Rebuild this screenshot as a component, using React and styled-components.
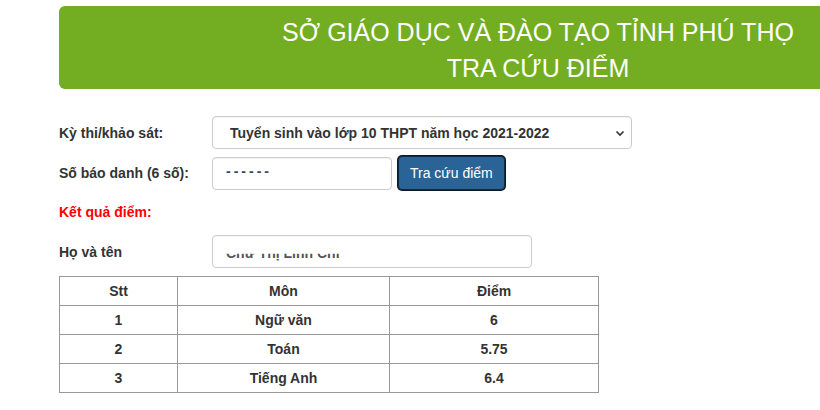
import React from "react";
import styled, { createGlobalStyle } from "styled-components";

const Global = createGlobalStyle`
  html, body {
    margin: 0;
    overflow: hidden;
    background: #fff;
    font-family: "Liberation Sans", Arial, sans-serif;
    color: #333;
  }
`;

const Page = styled.div`
  padding-left: 59px;
  padding-top: 6px;
`;

const Banner = styled.div`
  width: 958px;
  height: 83px;
  box-sizing: border-box;
  padding-top: 8px;
  background: #73ad21;
  border-radius: 6px;
  color: #fff;
  text-align: center;
  font-size: 25px;
  line-height: 36px;
`;

const Form = styled.div`
  margin-top: 27px;
  display: flex;
  flex-direction: column;
`;

const Row = styled.div`
  display: flex;
  align-items: center;
  margin-top: ${(p) => p.$gap || 0}px;
`;

const Label = styled.label`
  width: 153px;
  font-size: 14px;
  font-weight: bold;
  color: #333;
`;

const SelectBox = styled.div`
  position: relative;
  width: 420px;
  height: 33px;
  box-sizing: border-box;
  border: 1px solid #ccc;
  border-radius: 4px;
  display: flex;
  align-items: center;
  padding-left: 17px;
  font-size: 14px;
  font-weight: bold;
  color: #333;
  box-shadow: inset 0 1px 1px rgba(0, 0, 0, 0.05);
`;

const Chevron = styled.svg`
  position: absolute;
  right: 6px;
  top: 12px;
`;

const Field = styled.div`
  width: ${(p) => p.$w}px;
  height: 33px;
  box-sizing: border-box;
  border: 1px solid #ccc;
  border-radius: 4px;
  padding-left: 13px;
  font-size: 14px;
  color: #555;
  overflow: hidden;
  box-shadow: inset 0 1px 1px rgba(0, 0, 0, 0.05);
`;

const Masked = styled.span`
  display: block;
  line-height: 14px;
  margin-top: 6px;
  letter-spacing: 3px;
  color: #3d4660;
  font-weight: bold;
`;

const Hidden = styled.span`
  display: block;
  margin-top: 9px;
  font-weight: bold;
  line-height: 16px;
  clip-path: inset(55% 0 0 0);
`;

const Button = styled.button`
  margin-left: 6px;
  height: 34px;
  padding: 0 11px;
  background: #2a6496;
  color: #fff;
  font-family: inherit;
  font-size: 14px;
  border: 1px solid #122b40;
  border-radius: 4px;
  box-shadow: 0 0 0 1px #0b1a28;
`;

const Result = styled.div`
  margin-top: 12px;
  color: #f00;
  font-weight: bold;
  font-size: 14px;
  line-height: 20px;
`;

const Table = styled.table`
  margin-top: 8px;
  width: 540px;
  border-collapse: collapse;
  border: 1px solid #333;
  font-size: 14px;
  font-weight: bold;
  color: #333;
`;

const Cell = styled.td`
  border: 1px solid #999;
  height: 28px;
  padding: 0;
  text-align: center;
  width: ${(p) => p.$w || "auto"};
`;

const rows = [
  ["1", "Ngữ văn", "6"],
  ["2", "Toán", "5.75"],
  ["3", "Tiếng Anh", "6.4"],
];

export default function App() {
  return (
    <Page>
      <Global />
      <Banner>
        <div>SỞ GIÁO DỤC VÀ ĐÀO TẠO TỈNH PHÚ THỌ</div>
        <div>TRA CỨU ĐIỂM</div>
      </Banner>
      <Form>
        <Row>
          <Label>Kỳ thi/khảo sát:</Label>
          <SelectBox>
            Tuyển sinh vào lớp 10 THPT năm học 2021-2022
            <Chevron width="10" height="8" viewBox="0 0 10 8">
              <path d="M1.5 2.5 L5 6 L8.5 2.5" fill="none" stroke="#333" strokeWidth="1.6" />
            </Chevron>
          </SelectBox>
        </Row>
        <Row $gap={7}>
          <Label>Số báo danh (6 số):</Label>
          <Field $w={180}>
            <Masked>------</Masked>
          </Field>
          <Button>Tra cứu điểm</Button>
        </Row>
        <Result>Kết quả điểm:</Result>
        <Row $gap={13}>
          <Label>Họ và tên</Label>
          <Field $w={320}>
            <Hidden>Chử Thị Linh Chi</Hidden>
          </Field>
        </Row>
        <Table>
          <tbody>
            <tr>
              <Cell $w="117px">Stt</Cell>
              <Cell $w="211px">Môn</Cell>
              <Cell>Điểm</Cell>
            </tr>
            {rows.map((r) => (
              <tr key={r[0]}>
                <Cell>{r[0]}</Cell>
                <Cell>{r[1]}</Cell>
                <Cell>{r[2]}</Cell>
              </tr>
            ))}
          </tbody>
        </Table>
      </Form>
    </Page>
  );
}
